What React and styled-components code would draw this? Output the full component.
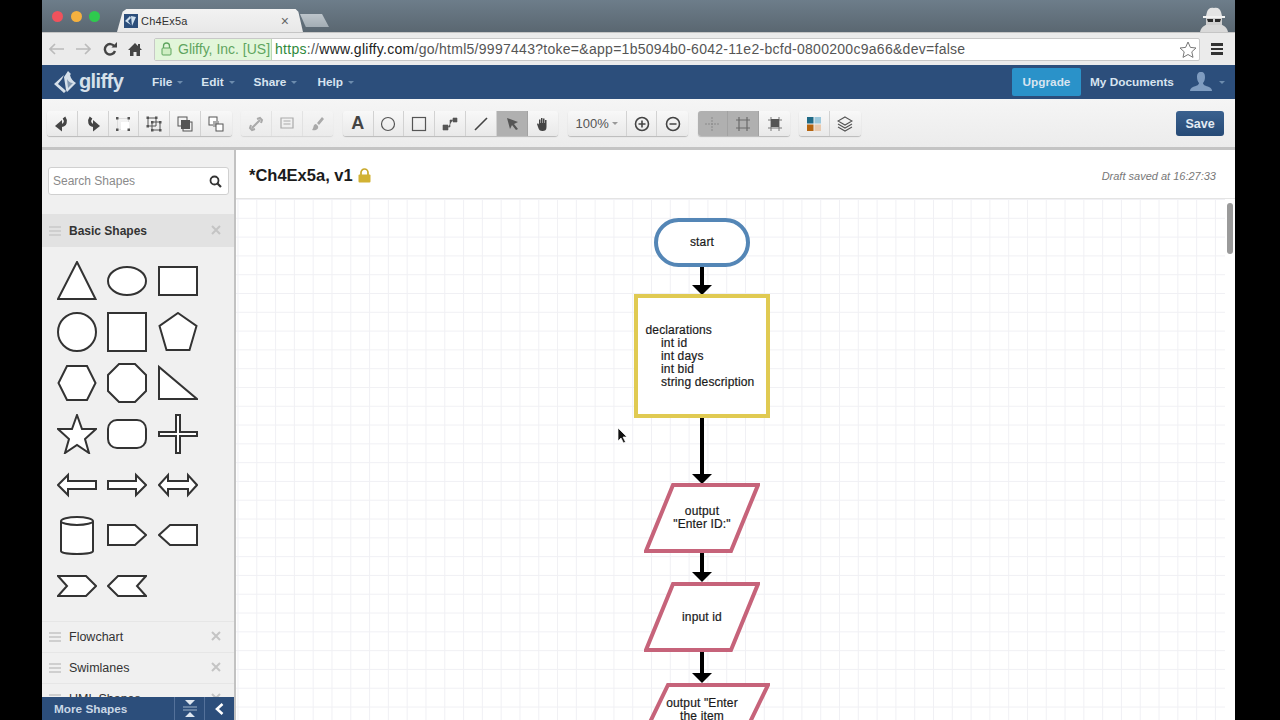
import React from "react";
import styled, { createGlobalStyle } from "styled-components";

const GlobalStyle = createGlobalStyle`
  html, body { margin: 0; padding: 0; background: #000; height: 100%; overflow: hidden; }
  body { font-family: "Liberation Sans", Arial, sans-serif; }
  #root { height: 100%; }
`;

const Page = styled.div`
  height: 720px;
  width: 1280px;
  padding-left: 42px;
  box-sizing: border-box;
  overflow: hidden;
`;

const Win = styled.div`
  width: 1193px;
  height: 720px;
  display: flex;
  flex-direction: column;
  background: #fff;
  overflow: hidden;
`;

/* browser chrome */
const TabStrip = styled.div`
  height: 32px;
  flex: none;
  display: flex;
  align-items: flex-end;
  background: linear-gradient(#6d7d8a, #5a6771);
  padding-left: 10px;
  position: relative;
`;

const Lights = styled.div`
  display: flex;
  gap: 7.5px;
  align-self: flex-start;
  margin-top: 11px;
  width: 65px;
`;

const Light = styled.span`
  width: 11px;
  height: 11px;
  border-radius: 50%;
  background: ${({ $c }) => $c};
`;

const Tab = styled.div`
  width: 186px;
  height: 23px;
  padding: 0 14px 0 7px;
  box-sizing: border-box;
  display: flex;
  align-items: center;
  gap: 3px;
  background: linear-gradient(#f2f2f2, #e8e8e8);
  clip-path: polygon(0 100%, 3% 12%, 5% 0, 96% 0, 97.5% 12%, 100% 100%);
  font-size: 11px;
  color: #333;
`;

const TabTitle = styled.span`
  flex: 1;
  letter-spacing: 0.2px;
`;

const TabClose = styled.span`
  font-size: 14px;
  color: #666;
`;

const NewTab = styled.div`
  width: 29px;
  height: 13px;
  margin: 0 0 5px -3px;
  background: linear-gradient(#bdc5cb, #a3adb4);
  clip-path: polygon(0 0, 76% 0, 100% 100%, 20% 100%);
`;

const Spy = styled.svg`
  position: absolute;
  right: 6px;
  top: 6px;
`;

const AddressRow = styled.div`
  height: 33px;
  flex: none;
  display: flex;
  align-items: center;
  box-sizing: border-box;
  border-top: 1px solid #c5c5c5;
  background: #ebebeb;
  padding-left: 7px;
`;

const NavIcons = styled.div`
  display: flex;
  align-items: center;
  width: 105px;
  gap: 11px;
`;

const Omnibox = styled.div`
  width: 1046px;
  height: 23px;
  flex: none;
  display: flex;
  align-items: center;
  background: #fff;
  border: 1px solid #c8c8c8;
  border-radius: 2px;
  box-sizing: border-box;
  font-size: 14px;
  color: #555;
  padding-right: 2px;
`;

const EvBadge = styled.div`
  height: 100%;
  width: 117px;
  flex: none;
  display: flex;
  align-items: center;
  gap: 6px;
  padding-left: 6px;
  box-sizing: border-box;
  background: #e2f6da;
  border-right: 1px solid #bcd8b4;
  color: #5fa55f;
  font-size: 14px;
  white-space: nowrap;
`;

const Url = styled.div`
  flex: 1;
  margin-left: 3px;
  letter-spacing: 0.28px;
  white-space: nowrap;
  overflow: hidden;
  & b { font-weight: 400; color: #2f8a3c; }
  & i { font-style: normal; color: #222; }
`;

const MenuBars = styled.div`
  margin-left: 11px;
  display: flex;
  flex-direction: column;
  gap: 2px;
  & span { width: 12px; height: 2.5px; background: #333; }
`;

/* gliffy header */
const Header = styled.div`
  height: 34px;
  flex: none;
  display: flex;
  align-items: center;
  background: #2c4e7b;
  color: #d8e4f0;
  font-size: 11.8px;
  font-weight: 700;
  padding-left: 11px;
`;

const LogoText = styled.span`
  font-size: 20px;
  letter-spacing: -0.6px;
  color: #d6e0ea;
  margin-left: 1px;
  width: 73px;
  line-height: 22px;
  margin-bottom: 2px;
`;

const MenuItem = styled.span`
  display: flex;
  align-items: center;
  gap: 5px;
  margin-right: ${({ $mr }) => $mr}px;
`;

const Caret = styled.i`
  width: 0;
  height: 0;
  border: 3px solid transparent;
  border-top: 3px solid #6d8cae;
  margin-top: 3px;
`;

const HeaderRight = styled.div`
  margin-left: auto;
  display: flex;
  align-items: center;
  padding-right: 10px;
`;

const Upgrade = styled.div`
  width: 69px;
  height: 28px;
  display: flex;
  align-items: center;
  justify-content: center;
  background: #2a92c9;
  border-radius: 2px;
  margin-right: 9px;
`;

const Docs = styled.span`
  width: 100px;
`;

/* toolbar */
const Toolbar = styled.div`
  height: 51px;
  flex: none;
  display: flex;
  align-items: flex-start;
  box-sizing: border-box;
  padding: 12px 11px 0 5px;
  gap: 9.3px;
  background: linear-gradient(#f5f5f5, #ececec);
  border-bottom: 3px solid #c4c4c4;
`;

const Group = styled.div`
  display: flex;
  height: 25px;
  border-radius: 3px;
  box-shadow: 0 1px 1px #b9b9b9;
  overflow: hidden;
  opacity: ${({ $off }) => ($off ? 0.45 : 1)};
`;

const Btn = styled.div`
  width: ${({ $w }) => $w || 30.8}px;
  height: 100%;
  box-sizing: border-box;
  display: flex;
  align-items: center;
  justify-content: center;
  gap: 3px;
  font-size: 13px;
  color: #555;
  background: ${({ $on }) => ($on ? "#b0b0b0" : "linear-gradient(#f8f8f8, #e9e9e9)")};
  border-right: 1px solid ${({ $on }) => ($on ? "#a2a2a2" : "#d2d2d2")};
  &:last-child { border-right: 0; }
`;

const Letter = styled.b`
  font-size: 18px;
  color: #444;
`;

const Save = styled.div`
  margin-left: auto;
  width: 48px;
  height: 25px;
  border-radius: 3px;
  display: flex;
  align-items: center;
  justify-content: center;
  background: linear-gradient(#3a618f, #264a76);
  color: #e3ebf3;
  font-size: 12.5px;
  font-weight: 700;
`;

/* work area */
const Body = styled.div`
  flex: 1;
  min-height: 0;
  display: flex;
`;

const Sidebar = styled.aside`
  width: 194px;
  flex: none;
  display: flex;
  flex-direction: column;
  background: #f0f0f0;
  border-right: 2px solid #c2c2c2;
  box-sizing: border-box;
`;

const SearchBox = styled.div`
  margin: 17px 5px 19px 6px;
  height: 28px;
  box-sizing: border-box;
  flex: none;
  display: flex;
  align-items: center;
  justify-content: space-between;
  padding: 0 6px 0 4px;
  background: #fff;
  border: 1px solid #d0d0d0;
  border-radius: 3px;
  font-size: 12px;
  color: #8a8a8a;
`;

const SectionHead = styled.div`
  flex: none;
  height: ${({ $open }) => ($open ? 33 : 31)}px;
  display: flex;
  align-items: center;
  padding: 0 8px 0 7px;
  gap: 8px;
  background: ${({ $open }) => ($open ? "#e2e2e2" : "transparent")};
  border-bottom: ${({ $open }) => ($open ? "0" : "1px solid #e6e6e6")};
  box-sizing: border-box;
  font-size: ${({ $open }) => ($open ? 12 : 12.5)}px;
  color: #333;
  font-weight: ${({ $open }) => ($open ? 700 : 400)};
`;

const Grip = styled.div`
  width: 12px;
  height: 10px;
  flex: none;
  background: repeating-linear-gradient(#cfcfcf 0 2px, transparent 2px 4px);
`;

const SectionName = styled.span`
  flex: 1;
`;

const CloseX = styled.svg`
  flex: none;
  margin: -2px 5px 0 0;
`;

const Palette = styled.div`
  flex: none;
  height: 375px;
  box-sizing: border-box;
  padding: 9px 0 0 14.5px;
  display: grid;
  grid-template-columns: repeat(3, 50.5px);
  grid-auto-rows: 50.8px;
  align-items: center;
  justify-items: start;
  border-bottom: 1px solid #e6e6e6;
`;

const SideList = styled.div`
  flex: 1;
  min-height: 0;
  overflow: hidden;
`;

const MoreBar = styled.div`
  height: 23px;
  flex: none;
  display: flex;
  align-items: center;
  background: #2c4e7b;
  color: #c9d7e6;
  font-size: 11.8px;
  font-weight: 700;
`;

const MoreLabel = styled.span`
  flex: 1;
  padding-left: 12px;
`;

const MoreBtn = styled.div`
  width: ${({ $w }) => $w}px;
  height: 100%;
  display: flex;
  align-items: center;
  justify-content: center;
  border-left: 1px solid #54719a;
`;

const Main = styled.main`
  flex: 1;
  min-width: 0;
  display: flex;
  flex-direction: column;
`;

const TitleBar = styled.div`
  height: 49px;
  flex: none;
  display: flex;
  align-items: center;
  padding: 3px 19px 0 13px;
  box-sizing: border-box;
  border-bottom: 1px solid #e4e4e4;
`;

const DocTitle = styled.span`
  font-size: 16.5px;
  font-weight: 700;
  color: #1b1b1b;
  margin-right: 5px;
`;

const Draft = styled.span`
  margin-left: auto;
  font-size: 11px;
  font-style: italic;
  color: #777;
`;

const CanvasWrap = styled.div`
  flex: 1;
  min-height: 0;
  display: flex;
`;

const Canvas = styled.div`
  flex: 1;
  position: relative;
  overflow: hidden;
  background-color: #fff;
  background-image:
    linear-gradient(90deg, #f0f0f4 1px, transparent 1px),
    linear-gradient(#f0f0f4 1px, transparent 1px);
  background-size: 18.8px 18.8px;
  background-position: 1.5px 0px;
`;

const ScrollTrack = styled.div`
  width: 10px;
  flex: none;
  background: #fff;
  padding: 4px 2px 0 2px;
  box-sizing: border-box;
`;

const ScrollThumb = styled.div`
  height: 51px;
  width: 6px;
  background: #9a9a9a;
  border-radius: 3px;
`;

const Node = styled.div`
  position: absolute;
  left: ${({ $x }) => $x}px;
  top: ${({ $y }) => $y}px;
  width: ${({ $w }) => $w}px;
  height: ${({ $h }) => $h}px;
  box-sizing: border-box;
  display: flex;
  align-items: center;
  justify-content: center;
  text-align: center;
  font-size: 12px;
  letter-spacing: 0.15px;
  line-height: 13px;
  color: #1a1a1a;
  -webkit-text-stroke: 0.2px #1a1a1a;
`;

const Terminal = styled(Node)`
  background: #fff;
  border: 4px solid #5486b6;
  border-radius: 26px;
`;

const Declarations = styled(Node)`
  background: #fff;
  border: 4px solid #e0ca52;
  justify-content: flex-start;
  text-align: left;
  padding-left: 7.5px;
  white-space: nowrap;
`;

const DeclVars = styled.div`
  padding-left: 15.5px;
`;

const SlantShape = styled.svg`
  position: absolute;
  inset: 0;
`;

const SlantLabel = styled.span`
  position: relative;
`;

const Clipped = styled(SlantLabel)`
  align-self: flex-start;
  margin-top: 14px;
`;

const Arrow = styled.svg`
  position: absolute;
  left: ${({ $x }) => $x}px;
  top: ${({ $y }) => $y}px;
`;

const Cursor = styled.svg`
  position: absolute;
  left: 381px;
  top: 228px;
`;

/* small drawings */
const G = "#555";

const TOOL_ICONS = {
  undo: (
    <>
      <path d="M10 1.5c2.5 3.5 1.5 8-3 8" fill="none" stroke="#444" strokeWidth="3.2" />
      <path d="M8 4L1 10l7 5.5z" fill="#444" />
    </>
  ),
  redo: (
    <>
      <path d="M6 1.5c-2.5 3.5-1.5 8 3 8" fill="none" stroke="#444" strokeWidth="3.2" />
      <path d="M8 4l7 6-7 5.5z" fill="#444" />
    </>
  ),
  group: (
    <>
      <rect x="2.5" y="2.5" width="11" height="11" fill="none" stroke="#ddd" />
      <rect x="6" y="6" width="8" height="8" fill="#fff" />
      <path d="M1 1h2.5v2.5H1zM12.5 1H15v2.5h-2.5zM1 12.5h2.5V15H1zM12.5 12.5H15V15h-2.5z" fill={G} />
    </>
  ),
  ungroup: (
    <>
      <path d="M2 2h8v8H2zM6 6h8v8H6z" fill="none" stroke={G} />
      <path d="M0.5 0.5H3V3H0.5zM9 0.5h2.5V3H9zM0.5 9H3v2.5H0.5zM5 5h2.5v2.5H5zM13 5h2.5v2.5H13zM5 13h2.5v2.5H5zM13 13h2.5v2.5H13z" fill={G} />
    </>
  ),
  front: (
    <>
      <rect x="1" y="1" width="9" height="9" fill="none" stroke={G} />
      <rect x="6" y="6" width="9" height="9" fill="none" stroke={G} />
      <rect x="4" y="4" width="9" height="9" fill={G} />
    </>
  ),
  back: (
    <>
      <rect x="1" y="1" width="8" height="8" fill="#fff" stroke={G} />
      <rect x="5" y="5" width="6" height="6" fill="#aaa" />
      <rect x="8" y="8" width="7" height="7" fill="#fff" stroke={G} />
    </>
  ),
  link: <path d="M4 12l8-8M3 9l-1 3 2 2 3-1M9 3l3-1 2 2-1 3" fill="none" stroke={G} strokeWidth="2" />,
  note: <path d="M2 2h12v10H2zM4.5 5h7M4.5 8h7" fill="none" stroke={G} strokeWidth="1.2" />,
  brush: <path d="M12 1L7 7l2 2 5-6zM6 8c-3 0-2 4-4 6 4 1 7-1 6-4z" fill={G} />,
  circle: <circle cx="8" cy="8" r="6.5" fill="none" stroke={G} strokeWidth="1.2" />,
  square: <rect x="1.5" y="1.5" width="13" height="13" fill="none" stroke={G} strokeWidth="1.2" />,
  connector: <path d="M1 9h5v5H1zM11 2h4v4h-4zM6 11h2V4h3" fill={G} stroke={G} strokeWidth="0.6" />,
  line: <path d="M2 14L14 2" stroke="#444" strokeWidth="1.6" />,
  select: <path d="M3 2l11 4-4 2 4 5-2 1-4-5-2 4z" fill="#555" />,
  hand: <path d="M4 7V3.5h1.5V7h.5V2h1.5v5H8V2.5h1.5V7h.5V4h1.5v7c0 3-1.5 4-4 4S4 14 3 11L2 8c1-1 2 0 2 1z" fill="#444" />,
  plus: (
    <>
      <circle cx="8" cy="8" r="6.5" fill="none" stroke="#444" strokeWidth="1.6" />
      <path d="M4.5 8h7M8 4.5v7" stroke="#444" strokeWidth="1.6" />
    </>
  ),
  minus: (
    <>
      <circle cx="8" cy="8" r="6.5" fill="none" stroke="#444" strokeWidth="1.6" />
      <path d="M4.5 8h7" stroke="#444" strokeWidth="1.6" />
    </>
  ),
  guides: <path d="M8 1v14M1 8h14" stroke="#8a8a8a" strokeDasharray="2 1" />,
  grid: <path d="M4 1v14M12 1v14M1 4h14M1 12h14" stroke="#6a6a6a" strokeWidth="1.2" />,
  snap: (
    <>
      <path d="M4 1v14M12 1v14M1 4h14M1 12h14" stroke="#777" />
      <rect x="4" y="3" width="8" height="8" fill="#555" />
    </>
  ),
  theme: (
    <>
      <rect x="1" y="1" width="6.5" height="6.5" fill="#1f6a86" />
      <rect x="8.5" y="1" width="6.5" height="6.5" fill="#9cc8dc" />
      <rect x="1" y="8.5" width="6.5" height="6.5" fill="#b5640f" />
      <rect x="8.5" y="8.5" width="6.5" height="6.5" fill="#e8c9ae" />
    </>
  ),
  layers: <path d="M8 1l7 4-7 4-7-4zM1 8l7 4 7-4M1 11l7 4 7-4" fill="none" stroke="#555" strokeWidth="1.1" />,
};

const Tool = ({ name, on }) => (
  <Btn $on={on}>
    <svg width="16" height="16" viewBox="0 0 16 16">{TOOL_ICONS[name]}</svg>
  </Btn>
);

const Stencil = ({ children }) => (
  <svg width="40" height="40" viewBox="0 0 40 40" fill="#fff" stroke="#333" strokeWidth="2">
    {children}
  </svg>
);

const STENCILS = [
  <polygon key="a" points="20,1 38.5,38 1,38" />,
  <ellipse key="b" cx="20" cy="20" rx="19" ry="14" />,
  <rect key="c" x="1" y="6" width="38" height="28" />,
  <circle key="d" cx="20" cy="20" r="19" />,
  <rect key="e" x="1" y="1" width="38" height="38" />,
  <polygon key="f" points="20,1 38.5,14 31.5,38 8.5,38 1.5,14" />,
  <polygon key="g" points="10,3 30,3 38.5,20 30,37 10,37 1.5,20" />,
  <polygon key="h" points="12,1 28,1 39,12 39,28 28,39 12,39 1,28 1,12" />,
  <polygon key="i" points="1,4 1,36 39,36" />,
  <polygon key="j" points="20,1 25,15 39,15 28,25 32,39 20,31 8,39 12,25 1,15 15,15" />,
  <rect key="k" x="1" y="6" width="38" height="28" rx="9" />,
  <polygon key="l" points="18,1 22,1 22,18 39,18 39,22 22,22 22,39 18,39 18,22 1,22 1,18 18,18" />,
  <polygon key="m" points="1,20 11,10 11,16 39,16 39,24 11,24 11,30" />,
  <polygon key="n" points="39,20 29,10 29,16 1,16 1,24 29,24 29,30" />,
  <polygon key="o" points="1,20 10,10 10,16 30,16 30,10 39,20 30,30 30,24 10,24 10,30" />,
  <g key="p">
    <path d="M4 6v30c0 4 32 4 32 0V6" />
    <ellipse cx="20" cy="6" rx="16" ry="4" />
  </g>,
  <polygon key="q" points="1,10 28,10 39,20 28,30 1,30" />,
  <polygon key="r" points="39,10 12,10 1,20 12,30 39,30" />,
  <polygon key="s" points="1,10 29,10 39,20 29,30 1,30 10,20" />,
  <polygon key="t" points="39,10 11,10 1,20 11,30 39,30 30,20" />,
];

const CrossIcon = () => (
  <CloseX width="10" height="10" viewBox="0 0 10 10">
    <path d="M1 1l8 8M9 1l-8 8" stroke="#c4c4c4" strokeWidth="2" />
  </CloseX>
);

const FlowArrow = ({ x, y, len }) => (
  <Arrow $x={x} $y={y} width="20" height={len} viewBox={`0 0 20 ${len}`}>
    <path d={`M10 0V${len - 9}`} stroke="#000" strokeWidth="4" />
    <polygon points={`0,${len - 10} 20,${len - 10} 10,${len}`} fill="#000" />
  </Arrow>
);

const Slant = ({ x, y, w, h, dx, label, clipped }) => (
  <Node $x={x} $y={y} $w={w} $h={h}>
    <SlantShape width={w} height={h} viewBox={`0 0 ${w} ${h}`}>
      <polygon
        points={`${dx},2 ${w - 2},2 ${w - dx},${h - 2} 2,${h - 2}`}
        fill="#fff"
        stroke="#c6637a"
        strokeWidth="4"
      />
    </SlantShape>
    {clipped ? <Clipped>{label}</Clipped> : <SlantLabel>{label}</SlantLabel>}
  </Node>
);

export default function App() {
  return (
    <Page>
      <GlobalStyle />
      <Win>
        <TabStrip>
          <Lights>
            <Light $c="#f0525c" />
            <Light $c="#f5b13f" />
            <Light $c="#2fca4e" />
          </Lights>
          <Tab>
            <svg width="14" height="14" viewBox="0 0 14 14">
              <rect width="14" height="14" fill="#2c4e7b" />
              <path d="M1 7l5-5 1 2-3 3 3 4zM7 2l5 1-4 9z" fill="#cfe0ee" />
            </svg>
            <TabTitle>Ch4Ex5a</TabTitle>
            <TabClose>×</TabClose>
          </Tab>
          <NewTab />
          <Spy width="30" height="26" viewBox="0 0 30 26">
            <path d="M1 26c1-5 5-7 8-8h12c3 1 7 3 8 8z" fill="#d9d9d9" />
            <path d="M8 6c1-3 3-5 7-4 4-1 6 1 7 4l1 4H7z" fill="#e4e4e4" />
            <rect x="4" y="10" width="22" height="2" fill="#f2f2f2" />
            <rect x="7" y="12" width="16" height="7" fill="#cfcfcf" />
            <path d="M8 13h6v3H9zM16 13h6l-1 3h-5z" fill="#2a2a2a" />
          </Spy>
        </TabStrip>

        <AddressRow>
          <NavIcons>
            <svg width="15" height="12" viewBox="0 0 15 12"><path d="M6 1L1 6l5 5M1 6h14" fill="none" stroke="#bbb" strokeWidth="1.6" /></svg>
            <svg width="15" height="12" viewBox="0 0 15 12" style={{ marginLeft: 1 }}><path d="M9 1l5 5-5 5M14 6H0" fill="none" stroke="#bbb" strokeWidth="1.6" /></svg>
            <svg width="14" height="14" viewBox="0 0 14 14" style={{ marginLeft: 1 }}><path d="M11.5 4.5A5.2 5.2 0 1 0 12 9" fill="none" stroke="#444" strokeWidth="2.4" /><path d="M8.5 5.5H14V0z" fill="#444" /></svg>
            <svg width="14" height="13" viewBox="0 0 14 13"><path d="M7 0L0 7h2v6h3.5V9h3v4H12V7h2l-2-2V1h-2v2z" fill="#444" /></svg>
          </NavIcons>
          <Omnibox>
            <EvBadge>
              <svg width="11" height="14" viewBox="0 0 11 14">
                <path d="M2.5 6V4a3 3 0 0 1 6 0v2" fill="none" stroke="#5fa55f" strokeWidth="1.3" />
                <rect x="1" y="6" width="9" height="7" rx="1" fill="#cfeec3" stroke="#5fa55f" />
              </svg>
              Gliffy, Inc. [US]
            </EvBadge>
            <Url>
              <b>https</b>://<i>www.gliffy.com</i>/go/html5/9997443?toke=&amp;app=1b5094b0-6042-11e2-bcfd-0800200c9a66&amp;dev=false
            </Url>
            <svg width="18" height="17" viewBox="0 0 18 17">
              <polygon points="9,1 11.4,6.4 17,7 12.8,10.8 14,16.4 9,13.5 4,16.4 5.2,10.8 1,7 6.6,6.4" fill="#fff" stroke="#777" />
            </svg>
          </Omnibox>
          <MenuBars><span /><span /><span /></MenuBars>
        </AddressRow>

        <Header>
          <svg width="25" height="24" viewBox="0 0 25 24">
            <path d="M1 14L11 5 9 9l-4 5 6 5 2 2-2 2z" fill="#d6e0ea" />
            <path d="M11 7l4-6 3 3-1 1c1 4 3 6 6 8l-9 9-1-2z" fill="#d6e0ea" />
            <path d="M14 9l1 9 5-5c-3 0-5-2-6-4z" fill="#7f96b0" />
          </svg>
          <LogoText>gliffy</LogoText>
          <MenuItem $mr={18}>File<Caret /></MenuItem>
          <MenuItem $mr={19}>Edit<Caret /></MenuItem>
          <MenuItem $mr={20}>Share<Caret /></MenuItem>
          <MenuItem>Help<Caret /></MenuItem>
          <HeaderRight>
            <Upgrade>Upgrade</Upgrade>
            <Docs>My Documents</Docs>
            <svg width="22" height="24" viewBox="0 0 22 24">
              <path d="M11 2c3 0 4 2 4 5s-1 5-2 6c0 2 3 3 6 4 2 1 3 2 3 4H0c0-2 1-3 3-4 3-1 6-2 6-4-1-1-2-3-2-6s1-5 4-5z" fill="#7f9cc0" />
            </svg>
            <Caret style={{ marginLeft: 7 }} />
          </HeaderRight>
        </Header>

        <Toolbar>
          <Group>
            {["undo", "redo", "group", "ungroup", "front", "back"].map((n) => <Tool key={n} name={n} />)}
          </Group>
          <Group $off>
            {["link", "note", "brush"].map((n) => <Tool key={n} name={n} />)}
          </Group>
          <Group>
            <Btn><Letter>A</Letter></Btn>
            <Tool name="circle" />
            <Tool name="square" />
            <Tool name="connector" />
            <Tool name="line" />
            <Tool name="select" on />
            <Tool name="hand" />
          </Group>
          <Group>
            <Btn $w={59}>100%<Caret style={{ borderTopColor: "#999" }} /></Btn>
            <Tool name="plus" />
            <Tool name="minus" />
          </Group>
          <Group>
            <Tool name="guides" on />
            <Tool name="grid" on />
            <Tool name="snap" />
          </Group>
          <Group>
            <Tool name="theme" />
            <Tool name="layers" />
          </Group>
          <Save>Save</Save>
        </Toolbar>

        <Body>
          <Sidebar>
            <SearchBox>
              Search Shapes
              <svg width="13" height="13" viewBox="0 0 13 13">
                <circle cx="5.5" cy="5.5" r="4" fill="none" stroke="#333" strokeWidth="1.8" />
                <path d="M8.5 8.5L12 12" stroke="#333" strokeWidth="2.2" />
              </svg>
            </SearchBox>
            <SectionHead $open>
              <Grip />
              <SectionName>Basic Shapes</SectionName>
              <CrossIcon />
            </SectionHead>
            <Palette>
              {STENCILS.map((s, i) => <Stencil key={i}>{s}</Stencil>)}
            </Palette>
            <SideList>
              <SectionHead><Grip /><SectionName>Flowchart</SectionName><CrossIcon /></SectionHead>
              <SectionHead><Grip /><SectionName>Swimlanes</SectionName><CrossIcon /></SectionHead>
              <SectionHead><Grip /><SectionName>UML Shapes</SectionName><CrossIcon /></SectionHead>
            </SideList>
            <MoreBar>
              <MoreLabel>More Shapes</MoreLabel>
              <MoreBtn $w={29}>
                <svg width="14" height="17" viewBox="0 0 14 17">
                  <path d="M2 0h10L7 5zM2 17h10l-5-5z" fill="#dfe7f0" />
                  <path d="M0 7h14M0 10h14" stroke="#9fb3ca" />
                </svg>
              </MoreBtn>
              <MoreBtn $w={29}>
                <svg width="9" height="12" viewBox="0 0 9 12"><path d="M7.5 1L2 6l5.5 5" fill="none" stroke="#fff" strokeWidth="2.6" /></svg>
              </MoreBtn>
            </MoreBar>
          </Sidebar>

          <Main>
            <TitleBar>
              <DocTitle>*Ch4Ex5a, v1</DocTitle>
              <svg width="13" height="15" viewBox="0 0 13 15">
                <path d="M3 7V4.5a3.5 3.5 0 0 1 7 0V7" fill="none" stroke="#c9a92c" strokeWidth="1.7" />
                <rect x="0.5" y="6.5" width="12" height="8" rx="1" fill="#d2b233" />
              </svg>
              <Draft>Draft saved at 16:27:33</Draft>
            </TitleBar>
            <CanvasWrap>
              <Canvas>
                <Terminal $x={418} $y={19} $w={96} $h={49}>start</Terminal>
                <FlowArrow x={456} y={68} len={28} />
                <Declarations $x={398} $y={95} $w={136} $h={124}>
                  <div>
                    declarations
                    <DeclVars>int id<br />int days<br />int bid<br />string description</DeclVars>
                  </div>
                </Declarations>
                <FlowArrow x={456} y={219} len={66} />
                <Slant x={408} y={284} w={116} h={70} dx={29} label={<>output<br />"Enter ID:"</>} />
                <FlowArrow x={456} y={354} len={29} />
                <Slant x={408} y={383} w={116} h={70} dx={29} label="input id" />
                <FlowArrow x={456} y={453} len={31} />
                <Slant x={398} y={484} w={136} h={70} dx={34} label={<>output "Enter<br />the item</>} clipped />
                <Cursor width="12" height="18" viewBox="0 0 12 18">
                  <path d="M1 1v13l3-3 2.5 5 2-1-2.5-5H10z" fill="#111" stroke="#fff" strokeWidth="0.7" />
                </Cursor>
              </Canvas>
              <ScrollTrack><ScrollThumb /></ScrollTrack>
            </CanvasWrap>
          </Main>
        </Body>
      </Win>
    </Page>
  );
}
